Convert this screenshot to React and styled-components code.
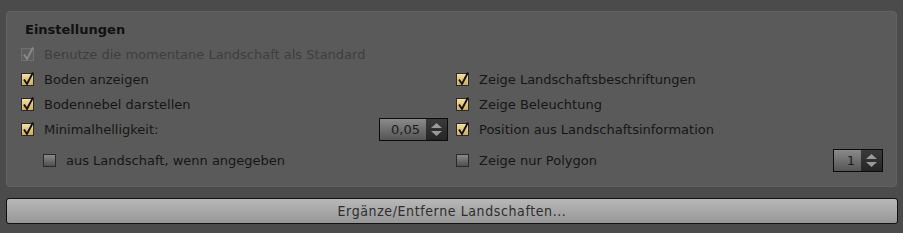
import React from 'react';
import styled, { createGlobalStyle } from 'styled-components';

const GlobalStyle = createGlobalStyle`
  html, body {
    margin: 0;
    padding: 0;
    background: #4b4b4b;
  }
  body {
    font-family: 'DejaVu Sans', Verdana, sans-serif;
    font-size: 13px;
  }
`;

const Page = styled.div`
  width: 903px;
  height: 233px;
  padding: 11px 5px 0 6px;
  box-sizing: border-box;
  background: #4b4b4b;
`;

const Panel = styled.div`
  background: #5a5a5a;
  border: 1px solid #626262;
  border-radius: 4px;
  padding: 9px 13px 10px 14px;
  height: 176px;
  box-sizing: border-box;
  margin-right: 1px;
`;

const Title = styled.div`
  font-weight: bold;
  font-size: 13px;
  color: #111;
  padding-left: 4px;
  height: 18px;
  line-height: 18px;
  margin-bottom: 3px;
`;

const Grid = styled.div`
  display: grid;
  grid-template-columns: 427px 1fr;
  column-gap: 8px;
  grid-auto-rows: 25px;
`;

const Cell = styled.div`
  display: flex;
  align-items: center;
  grid-column: ${({ $span }) => ($span ? '1 / -1' : 'auto')};
  padding-left: ${({ $indent }) => ($indent ? '22px' : '0')};
  height: ${({ $tall }) => ($tall ? '31px' : 'auto')};
  padding-top: ${({ $tall }) => ($tall ? '6px' : '0')};
  box-sizing: border-box;
`;

const Label = styled.span`
  color: ${({ $disabled }) => ($disabled ? '#3e3e3e' : '#161616')};
  margin-left: 10px;
  white-space: nowrap;
  flex: 1;
`;

const Box = styled.span`
  position: relative;
  width: 13px;
  height: 13px;
  box-sizing: border-box;
  border: 1px solid ${({ $disabled }) => ($disabled ? '#707070' : '#2a2a2a')};
  background: ${({ $checked, $disabled }) =>
    $disabled
      ? '#5f5f5f'
      : $checked
      ? 'linear-gradient(#f3e0a0, #d2ac52)'
      : 'linear-gradient(#8a8a8a, #4e4e4e)'};
  flex: none;

  svg {
    position: absolute;
    left: 0;
    top: -3px;
    overflow: visible;
  }
`;

const Spin = styled.div`
  display: flex;
  width: ${({ $w }) => $w}px;
  height: 23px;
  border: 1px solid #0c0c0c;
  box-sizing: border-box;
  flex: none;
`;

const SpinValue = styled.div`
  flex: 1;
  background: linear-gradient(#8a8a8a, #555);
  color: #1c1c1c;
  text-align: right;
  padding-right: 6px;
  line-height: 21px;
  font-size: 13px;
`;

const SpinArrows = styled.div`
  width: 21px;
  background: linear-gradient(#3a3a3a, #262626);
  display: flex;
  flex-direction: column;
  align-items: center;
  justify-content: center;
  gap: 3px;
`;

const Button = styled.div`
  margin-top: 11px;
  height: 26px;
  border: 1px solid #111;
  border-radius: 3px;
  background: linear-gradient(#b8b8b8, #979797);
  color: #2e2e2e;
  text-align: center;
  line-height: 24px;
  font-family: 'DejaVu Sans Condensed', 'DejaVu Sans', sans-serif;
  font-size: 14px;
  letter-spacing: 0.6px;
  box-sizing: border-box;
`;

const Check = ({ checked, disabled }) => (
  <Box $checked={checked} $disabled={disabled}>
    {checked && (
      <svg width="13" height="15" viewBox="0 0 13 15">
        <path
          d="M2 8.5 L5 13 L11 1.5"
          fill="none"
          stroke={disabled ? '#8a8a8a' : '#111'}
          strokeWidth="1.9"
        />
      </svg>
    )}
  </Box>
);

const Spinner = ({ value, width }) => (
  <Spin $w={width}>
    <SpinValue>{value}</SpinValue>
    <SpinArrows>
      <svg width="11" height="5" viewBox="0 0 11 5">
        <path d="M0 5 L5.5 0 L11 5 Z" fill="#9a9a9a" />
      </svg>
      <svg width="11" height="5" viewBox="0 0 11 5">
        <path d="M0 0 L5.5 5 L11 0 Z" fill="#9a9a9a" />
      </svg>
    </SpinArrows>
  </Spin>
);

const Option = ({ label, checked, disabled, span, indent, tall, extra }) => (
  <Cell $span={span} $indent={indent} $tall={tall}>
    <Check checked={checked} disabled={disabled} />
    <Label $disabled={disabled}>{label}</Label>
    {extra}
  </Cell>
);

export default function App() {
  return (
    <Page>
      <GlobalStyle />
      <Panel>
        <Title>Einstellungen</Title>
        <Grid>
          <Option span checked disabled label="Benutze die momentane Landschaft als Standard" />
          <Option checked label="Boden anzeigen" />
          <Option checked label="Zeige Landschaftsbeschriftungen" />
          <Option checked label="Bodennebel darstellen" />
          <Option checked label="Zeige Beleuchtung" />
          <Option checked label="Minimalhelligkeit:" extra={<Spinner value="0,05" width={69} />} />
          <Option checked label="Position aus Landschaftsinformation" />
          <Option indent tall label="aus Landschaft, wenn angegeben" />
          <Option tall label="Zeige nur Polygon" extra={<Spinner value="1" width={50} />} />
        </Grid>
      </Panel>
      <Button>Ergänze/Entferne Landschaften...</Button>
    </Page>
  );
}
